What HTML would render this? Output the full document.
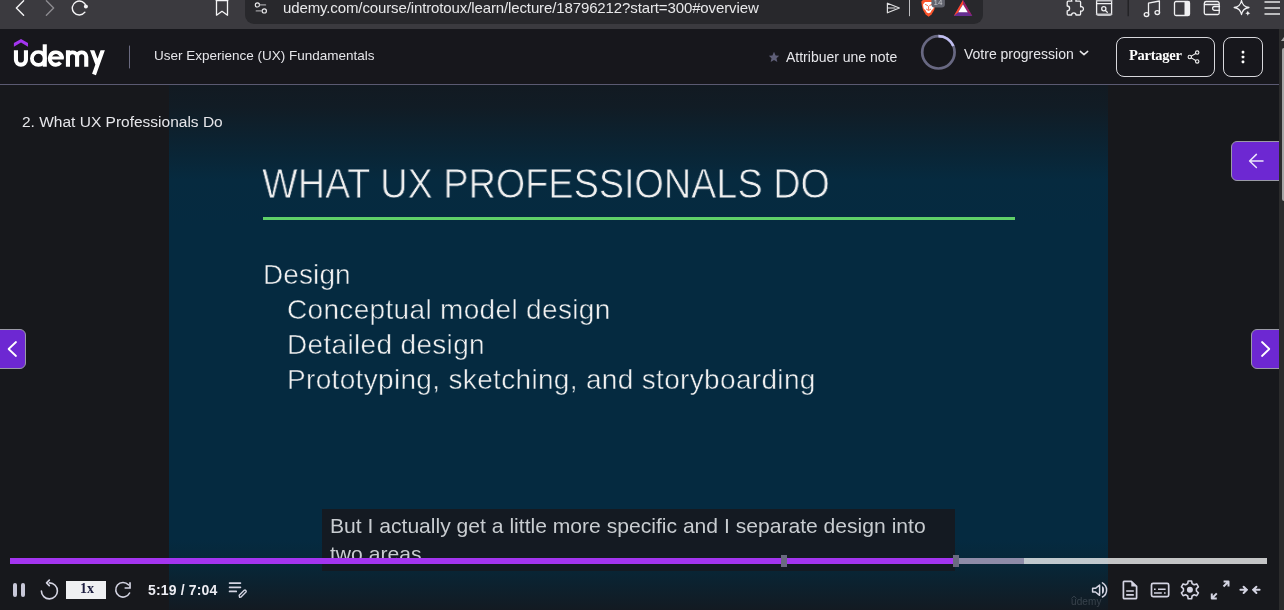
<!DOCTYPE html>
<html><head><meta charset="utf-8">
<style>
*{margin:0;padding:0;box-sizing:border-box}
html,body{width:1284px;height:610px;overflow:hidden;background:#18181d;font-family:"Liberation Sans",sans-serif}
.a{position:absolute}
.t{position:absolute;white-space:nowrap;line-height:1;will-change:transform}
#tb{left:0;top:0;width:1284px;height:29px;background:#3b3a3f}
#url{left:245px;top:-10px;width:738px;height:34px;background:#28282c;border-radius:9px}
#hdr{left:0;top:29px;width:1279px;height:55px;background:#17171c}
#hline{left:0;top:84px;width:1279px;height:1px;background:#5b5a72}
#main{left:0;top:85px;width:1279px;height:525px;background:#17181c}
#slide{left:169px;top:85px;width:939px;height:525px;background:linear-gradient(#121a22 0px,#111c25 22px,#0b2332 58px,#062a3f 95px,#052a40 140px,#052a40 455px,#072738 480px,#131a22 525px)}
#sb{z-index:7;left:1279px;top:29px;width:5px;height:581px;background:#2b2b2c}
#thumb{z-index:8;left:1282px;top:48px;width:2px;height:153px;background:#a5a5a5;border-radius:2px 0 0 2px}
.ic{position:absolute;overflow:visible}
</style></head><body>
<div id="tb" class="a"></div>
<div id="url" class="a"></div>
<div id="hdr" class="a"></div>
<div id="main" class="a"></div>
<div id="slide" class="a"></div>
<div id="hline" class="a"></div>
<div id="sb" class="a"></div>
<div id="thumb" class="a"></div>
<div class="a" style="z-index:8;left:1281px;top:37px;width:0;height:0;border-left:3px solid transparent;border-right:3px solid transparent;border-bottom:4px solid #a8a8a8"></div>

<!-- URL text -->
<div class="t" style="left:283px;top:0px;font-size:15px;letter-spacing:-0.12px;color:#e8e8ea">udemy.com/course/introtoux/learn/lecture/18796212?start=300#overview</div>

<!-- header -->

<div class="t" style="left:154px;top:49px;font-size:13.5px;color:#e6e6ea">User Experience (UX) Fundamentals</div>
<div class="t" style="left:786px;top:50px;font-size:14px;color:#e6e6ea">Attribuer une note</div>
<div class="t" style="left:964px;top:47px;font-size:14px;color:#e6e6ea">Votre progression</div>
<div class="a" style="left:1116px;top:37px;width:99px;height:40px;border:1px solid #d8d8dc;border-radius:8px"></div>
<div class="t" style="left:1129px;top:48px;font-size:14.5px;letter-spacing:-0.25px;font-weight:bold;font-family:'Liberation Serif',serif;color:#fff">Partager</div>
<div class="a" style="left:1223px;top:37px;width:40px;height:40px;border:1px solid #d8d8dc;border-radius:8px"></div>

<!-- lecture title -->
<div class="t" style="left:22px;top:114px;font-size:15.5px;color:#e6e6ea">2. What UX Professionals Do</div>

<!-- slide text -->
<div class="t" style="left:262px;top:163px;font-size:42px;color:#f0f0f0;-webkit-text-stroke:0.8px #062a40;transform:scaleX(0.9);transform-origin:0 0">WHAT UX PROFESSIONALS DO</div>
<div class="a" style="left:263px;top:217px;width:752px;height:3px;background:#5fd068"></div>
<div class="t" style="left:263px;top:261px;font-size:28px;letter-spacing:0.1px;color:#f0f0f0;-webkit-text-stroke:0.5px #052a40">Design</div>
<div class="t" style="left:287px;top:296px;font-size:28px;letter-spacing:0.33px;color:#f0f0f0;-webkit-text-stroke:0.5px #052a40">Conceptual model design</div>
<div class="t" style="left:287px;top:331px;font-size:28px;letter-spacing:0.33px;color:#f0f0f0;-webkit-text-stroke:0.5px #052a40">Detailed design</div>
<div class="t" style="left:287px;top:366px;font-size:28px;letter-spacing:0.33px;color:#f0f0f0;-webkit-text-stroke:0.5px #052a40">Prototyping, sketching, and storyboarding</div>

<!-- captions -->
<div class="a" style="left:322px;top:509px;width:633px;height:62px;background:#141a22"></div>
<div class="t" style="left:330px;top:512px;font-size:21.1px;line-height:28px;color:#c8ccd0">But I actually get a little more specific and I separate design into<br>two areas</div>

<!-- progress -->
<div class="a" style="left:10px;top:558px;width:943px;height:6px;background:#a435f0"></div>
<div class="a" style="left:959px;top:558px;width:65px;height:6px;background:#8e8ca8"></div>
<div class="a" style="left:1024px;top:558px;width:243px;height:6px;background:rgba(255,255,255,0.75)"></div>
<div class="a" style="left:781px;top:555px;width:6px;height:12px;background:#6a6a80"></div>
<div class="a" style="left:953px;top:555px;width:6px;height:12px;background:#6a6a80"></div>

<!-- controls -->
<div class="a" style="left:13px;top:583px;width:4px;height:14px;background:#c8c8d8;border-radius:2px"></div>
<div class="a" style="left:21px;top:583px;width:4px;height:14px;background:#c8c8d8;border-radius:2px"></div>
<div class="a" style="left:66px;top:581px;width:40px;height:18px;background:#eff0f2"></div>
<div class="t" style="left:80px;top:582px;font-size:14px;font-weight:bold;font-family:'Liberation Serif',serif;color:#1c1d3f">1x</div>
<div class="t" style="left:148px;top:583px;font-size:14px;font-weight:bold;letter-spacing:0.15px;color:#ececf2">5:19 / 7:04</div>

<!-- nav buttons -->
<div class="a" style="left:-6px;top:329px;width:32px;height:40px;background:#6d28d2;border:1px solid #9a9aa6;border-radius:6px"></div>
<div class="a" style="left:1251px;top:329px;width:34px;height:40px;background:#6d28d2;border:1px solid #9a9aa6;border-radius:6px"></div>
<div class="a" style="left:1231px;top:141px;width:54px;height:40px;background:#6d28d2;border:1px solid #9a9aa6;border-radius:6px"></div>


<svg class="a" style="left:0;top:0;z-index:5" width="1284" height="610" viewBox="0 0 1284 610" fill="none" stroke-linecap="round" stroke-linejoin="round">
<!-- browser toolbar -->
<path d="M23.6 0.8 L16.4 8.1 L23.6 15.3" stroke="#f4f4f6" stroke-width="1.4"/>
<path d="M46.4 0.8 L53.6 8.1 L46.4 15.3" stroke="#8c8b90" stroke-width="1.4"/>
<path d="M84.9 12.2 A7 7 0 1 1 86.1 6.3" stroke="#f4f4f6" stroke-width="1.4"/>
<circle cx="85.9" cy="6.4" r="2" fill="#f4f4f6"/>
<path d="M216.5 -2 V15.2 L222 11.3 L227.5 15.2 V-2" stroke="#f4f4f6" stroke-width="1.3"/>
<path d="M216.3 0.5 H227.7" stroke="#f4f4f6" stroke-width="1.3"/>
<circle cx="257.4" cy="4.9" r="2.1" stroke="#e8e8ea" stroke-width="1.2"/>
<path d="M260 4.9 H265.5" stroke="#a0a0a4" stroke-width="1.4"/>
<circle cx="264.3" cy="10.9" r="2.1" stroke="#e8e8ea" stroke-width="1.2"/>
<path d="M256.3 10.9 H261.8" stroke="#a0a0a4" stroke-width="1.4"/>
<path d="M887.4 3.2 V12.8 L899.4 8 Z M887.4 8 H895" stroke="#e0e0e2" stroke-width="1.2"/>
<path d="M909.5 0 V15.8" stroke="#bdbdc0" stroke-width="1"/>
<path d="M921.3 1.5 L923.5 -0.5 H933.5 L935.8 1.5 L935.3 5.5 L934.2 10 L931.5 14.5 L928.6 16.8 L925.7 14.5 L923 10 L921.8 5.5 Z" fill="#fb542b"/>
<path d="M923 4.5 L925 2 H932 L934 4.5 L933.5 8.5 L931.5 10.5 L930.5 12.5 L928.6 13.3 L926.7 12.5 L925.7 10.5 L923.6 8.5 Z" fill="#fff"/>
<path d="M925.5 4.5 L927.5 5.5 M931.7 4.5 L929.7 5.5 M928.6 6.5 V9.5 M926.5 9.2 L928.6 10.5 L930.7 9.2" stroke="#fb542b" stroke-width="0.9"/>
<rect x="931.4" y="-4" width="13.5" height="11.5" rx="3.2" fill="#62646e"/>
<text x="933.6" y="5.2" style="font-family:'Liberation Sans',sans-serif;font-size:8px" fill="#c8c8cc">14</text>
<path d="M963 0 L953.8 15.9 H972.3 Z" fill="#662d91"/>
<path d="M963 0 L953.8 15.9 L958 12.5 L963 4 Z" fill="#ff4724"/>
<path d="M963 0 L972.3 15.9 L968 12.5 L963 4 Z" fill="#9e1f63"/>
<path d="M963 4.5 L958.3 12.3 H967.7 Z" fill="#fff"/>
<!-- puzzle -->
<path d="M1068.2 1.2 H1071.8 A2.2 2.2 0 1 1 1075.8 1.2 H1079.6 A1 1 0 0 1 1080.6 2.2 V6.8 A2.2 2.2 0 1 1 1080.6 11 V14 A1 1 0 0 1 1079.6 15 H1076 A2.2 2.2 0 1 0 1071.6 15 H1068.2 A1 1 0 0 1 1067.2 14 V10.8 A2.2 2.2 0 1 0 1067.2 6 V2.2 A1 1 0 0 1 1068.2 1.2 Z" stroke="#f0f0f2" stroke-width="1.3"/>
<rect x="1096.6" y="-1" width="15" height="16" rx="2" stroke="#f0f0f2" stroke-width="1.3"/>
<path d="M1096.6 0.8 H1111.6 M1096.6 14.4 H1111.6" stroke="#c8c8cc" stroke-width="1.6"/>
<path d="M1096.6 3.6 H1111.6" stroke="#f0f0f2" stroke-width="1.2"/>
<circle cx="1103.8" cy="8.8" r="2.1" stroke="#f0f0f2" stroke-width="1.3"/>
<path d="M1105.4 10.5 L1107.3 12.2" stroke="#f0f0f2" stroke-width="1.3"/>
<path d="M1128.2 0 V15.7" stroke="#1f1f23" stroke-width="1.3"/>
<!-- music -->
<path d="M1148.5 14.5 V3.2 L1159.4 1 V12.5" stroke="#f0f0f2" stroke-width="1.3"/>
<ellipse cx="1146.5" cy="14.6" rx="2.3" ry="1.9" stroke="#f0f0f2" stroke-width="1.3"/>
<ellipse cx="1157.3" cy="12.6" rx="2.3" ry="1.9" stroke="#f0f0f2" stroke-width="1.3"/>
<!-- sidebar -->
<rect x="1174.5" y="1.5" width="15" height="14" rx="1.5" stroke="#f0f0f2" stroke-width="1.3"/>
<rect x="1184.5" y="1.5" width="5" height="14" fill="#f0f0f2"/>
<!-- wallet -->
<path d="M1206 1.5 H1217 A2 2 0 0 1 1219.2 3.5 V13 A1.5 1.5 0 0 1 1217.7 14.5 H1205.8 A1.5 1.5 0 0 1 1204.3 13 V3.5 A2 2 0 0 1 1206 1.5 Z M1204.3 4.5 H1219.2" stroke="#f0f0f2" stroke-width="1.3"/>
<path d="M1219.5 6.5 H1214.5 A1.8 1.8 0 0 0 1214.5 10.3 H1219.5" stroke="#f0f0f2" stroke-width="1.3"/>
<!-- leo -->
<path d="M1241.5 0.5 Q1242.5 6.5 1249 7.5 Q1242.5 8.5 1241.5 14.5 Q1240.5 8.5 1234.2 7.5 Q1240.5 6.5 1241.5 0.5 Z" stroke="#f0f0f2" stroke-width="1.3"/>
<path d="M1247.8 10.7 Q1248.2 12.8 1250.3 13.2 Q1248.2 13.6 1247.8 15.8 Q1247.4 13.6 1245.3 13.2 Q1247.4 12.8 1247.8 10.7 Z" fill="#f0f0f2"/>
<!-- hamburger -->
<path d="M1264.5 2 H1280 M1264.5 8 H1280 M1264.5 14 H1280" stroke="#e6e6e8" stroke-width="1.7" stroke-linecap="butt"/>

<!-- udemy chevron -->
<clipPath id="lc"><rect x="0" y="50.2" width="120" height="30"/></clipPath>
<path d="M13.9 43 L21 39 L28 43 V46.7 L21 42.6 L13.9 46.7 Z" fill="#a435f0"/>
<g stroke="#fff" stroke-width="4.1" fill="none" stroke-linecap="butt" clip-path="url(#lc)">
<path d="M15.95 48 V59.65 A5 5 0 0 0 25.95 59.65 V48"/>
<circle cx="38.4" cy="58.45" r="6.5" stroke-width="3.8"/>
<path d="M62 58.4 A6.1 6.3 0 1 0 60.5 62.6" stroke-width="3.9"/>
<path d="M49.5 58.1 H63.7" stroke-width="3"/>
<path d="M67.95 48 V66.7 M67.95 56.85 A4.575 4.575 0 0 1 77.1 56.85 V66.7 M77.1 56.85 A4.575 4.575 0 0 1 86.25 56.85 V66.7"/>
<path d="M90.6 46 L97.6 64.8 M104.2 46 L94 74.5"/>
</g>
<rect x="42.7" y="44.3" width="4.1" height="22.4" fill="#fff"/>

<!-- header divider -->
<path d="M129.5 46 V68" stroke="#6a6a80" stroke-width="1"/>
<!-- star -->
<path d="M774 51.8 L775.6 55.4 L779.2 55.7 L776.5 58.2 L777.3 62 L774 60 L770.7 62 L771.5 58.2 L768.8 55.7 L772.4 55.4 Z" fill="#5f5f78"/>
<!-- progress ring -->
<circle cx="938.4" cy="52.3" r="16.2" stroke="#686882" stroke-width="2.7"/>
<path d="M938.4 36.1 A16.2 16.2 0 0 1 953.3 46" stroke="#c0bef0" stroke-width="2.7" stroke-linecap="butt"/>
<!-- chevron down -->
<path d="M1080.3 51.4 L1084 54.6 L1087.7 51.4" stroke="#e8e8ea" stroke-width="1.5"/>
<!-- share -->
<circle cx="1197.2" cy="52.6" r="1.7" stroke="#f0f0f0" stroke-width="1.1"/>
<circle cx="1189.8" cy="57" r="1.7" stroke="#f0f0f0" stroke-width="1.1"/>
<circle cx="1197.2" cy="61.4" r="1.7" stroke="#f0f0f0" stroke-width="1.1"/>
<path d="M1191.3 56.1 L1195.7 53.5 M1191.3 57.9 L1195.7 60.5" stroke="#f0f0f0" stroke-width="1.1"/>
<!-- dots -->
<rect x="1241.7" y="50.8" width="2.6" height="2.6" rx="0.6" fill="#fff"/>
<rect x="1241.7" y="55.7" width="2.6" height="2.6" rx="0.6" fill="#fff"/>
<rect x="1241.7" y="60.6" width="2.6" height="2.6" rx="0.6" fill="#fff"/>

<!-- nav arrows -->
<path d="M16 342 L8.6 349 L16 356" stroke="#fff" stroke-width="1.8"/>
<path d="M1262 342 L1269.3 349 L1262 356" stroke="#fff" stroke-width="1.8"/>
<path d="M1256.4 154.4 L1249.6 161 L1256.4 167.5 M1250 161 H1263" stroke="#ece6fa" stroke-width="1.5"/>

<!-- controls -->
<path d="M41.4 591 A8 8 0 1 0 49.5 582.9" stroke="#d4d4e2" stroke-width="1.6"/>
<path d="M49.3 580.2 L46.6 582.9 L49.3 585.6" stroke="#d4d4e2" stroke-width="1.7"/>
<path d="M129.6 593 A7.3 7.3 0 1 1 128.4 584.8" stroke="#d4d4e2" stroke-width="1.6"/>
<path d="M130 582.3 V588 H124.6" stroke="#d4d4e2" stroke-width="1.7" stroke-linejoin="miter" stroke-linecap="butt"/>
<path d="M229.6 583.1 H240.4 M229.6 587.3 H240.4 M229.6 591.4 H236.2" stroke="#d4d4e2" stroke-width="1.8"/>
<path d="M239.6 597.3 L239.2 595.3 L244.2 590.3 A1.3 1.3 0 0 1 246 592.1 L241 597.1 Z" stroke="#d4d4e2" stroke-width="1.4"/>
<!-- volume -->
<path d="M1092.6 588.3 H1095.5 L1099.6 585 V595.3 L1095.5 592 H1092.6 Z" stroke="#d4d4e2" stroke-width="1.5"/>
<path d="M1102 586.3 A2 3.7 0 0 1 1102 593.7 Z" fill="#d4d4e2"/>
<path d="M1102.4 582.8 A8.1 8.1 0 0 1 1102.4 597" stroke="#d4d4e2" stroke-width="1.5"/>
<!-- doc -->
<path d="M1123.4 582 A1 1 0 0 1 1124.4 581.3 H1131.3 L1136.6 586.4 V597.8 A1 1 0 0 1 1135.6 598.7 H1124.4 A1 1 0 0 1 1123.4 597.8 Z" stroke="#d4d4e2" stroke-width="1.7"/>
<path d="M1131.3 581.3 L1136.6 586.4 H1131.3 Z" fill="#d4d4e2"/>
<path d="M1126.2 591 H1133.8 M1126.2 594.9 H1133.8" stroke="#d4d4e2" stroke-width="1.6" stroke-linecap="butt"/>
<!-- captions -->
<rect x="1151.5" y="583.4" width="17.2" height="13.3" rx="1.6" stroke="#d4d4e2" stroke-width="1.7"/>
<path d="M1154 589.3 H1155.6 M1158 589.3 H1165.6 M1154 593 H1161.8 M1164 593 H1165.6" stroke="#d4d4e2" stroke-width="1.5" stroke-linecap="butt"/>
<!-- gear -->
<path d="M1188.2 581 H1191.6 L1192.1 583.6 L1194.2 584.8 L1196.7 583.9 L1198.4 586.8 L1196.4 588.6 V591 L1198.4 592.8 L1196.7 595.7 L1194.2 594.8 L1192.1 596 L1191.6 598.8 H1188.2 L1187.7 596 L1185.6 594.8 L1183.1 595.7 L1181.4 592.8 L1183.4 591 V588.6 L1181.4 586.8 L1183.1 583.9 L1185.6 584.8 L1187.7 583.6 Z" stroke="#d4d4e2" stroke-width="1.6"/>
<circle cx="1189.9" cy="589.8" r="3" fill="#d4d4e2"/>
<!-- expand -->
<path d="M1223.6 581.5 H1228.5 V586.5 M1228.3 581.7 L1223.5 586.5" stroke="#d4d4e2" stroke-width="2" stroke-linecap="butt"/>
<path d="M1211.8 593.4 V598.4 H1216.8 M1212 598.2 L1216.8 593.4" stroke="#d4d4e2" stroke-width="2" stroke-linecap="butt"/>
<!-- collapse -->
<path d="M1240.4 589.8 H1247 M1243.6 586.8 L1246.8 589.8 L1243.6 593" stroke="#d4d4e2" stroke-width="2"/>
<path d="M1259.6 589.8 H1253 M1256.4 586.8 L1253.2 589.8 L1256.4 593" stroke="#d4d4e2" stroke-width="2"/>
</svg>
<div class="t" style="left:1071px;top:596.5px;font-size:10px;color:rgba(210,215,225,0.2);z-index:4;letter-spacing:0.1px">udemy</div>
<svg class="a" style="left:1070px;top:594px;z-index:4" width="10" height="6"><path d="M1.5 4.5 L4 2.2 L6.5 4.5" stroke="rgba(210,215,225,0.2)" stroke-width="1" fill="none"/></svg>
</body></html>
